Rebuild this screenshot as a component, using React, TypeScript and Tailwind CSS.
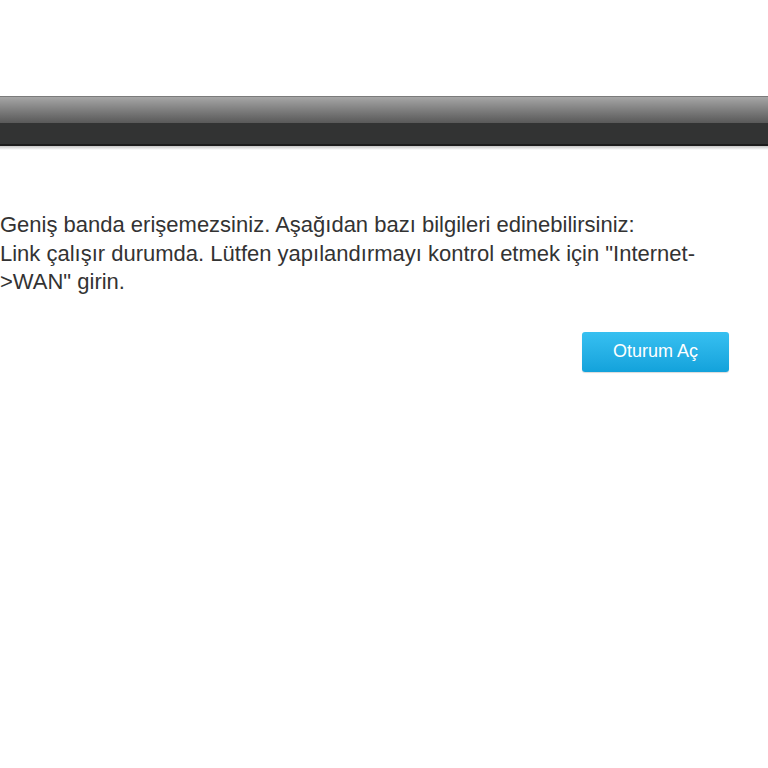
export default function App() {
  return (
    <div className="min-h-screen bg-white font-['Liberation_Sans',Arial,sans-serif]">
      <div className="h-[96px]" />
      {/* top bar */}
      <div className="flex flex-col">
        <div className="h-px bg-[#7b7b7b]" />
        <div className="h-[26px] bg-gradient-to-b from-[#a6a6a6] to-[#595959]" />
        <div className="h-[21px] bg-[#323333]" />
        <div className="h-[2px] bg-[#1c1c1c]" />
        <div className="h-[4px] bg-gradient-to-b from-[#c4c4c4] to-white" />
      </div>

      <div className="w-[712px] pt-[61px] text-[22px] leading-[28.5px] text-[#333333]">
        <p>Geniş banda erişemezsiniz. Aşağıdan bazı bilgileri edinebilirsiniz:</p>
        <p>Link çalışır durumda. Lütfen yapılandırmayı kontrol etmek için "Internet-&gt;WAN" girin.</p>
      </div>

      <div className="flex w-[729px] justify-end pt-[35px]">
        <button
          type="button"
          className="h-[40px] w-[147px] rounded-[3px] bg-gradient-to-b from-[#36c0f1] to-[#12a2db] text-[18px] text-white shadow-[0_1px_1px_rgba(0,0,0,0.15)]"
        >
          Oturum Aç
        </button>
      </div>
    </div>
  );
}
